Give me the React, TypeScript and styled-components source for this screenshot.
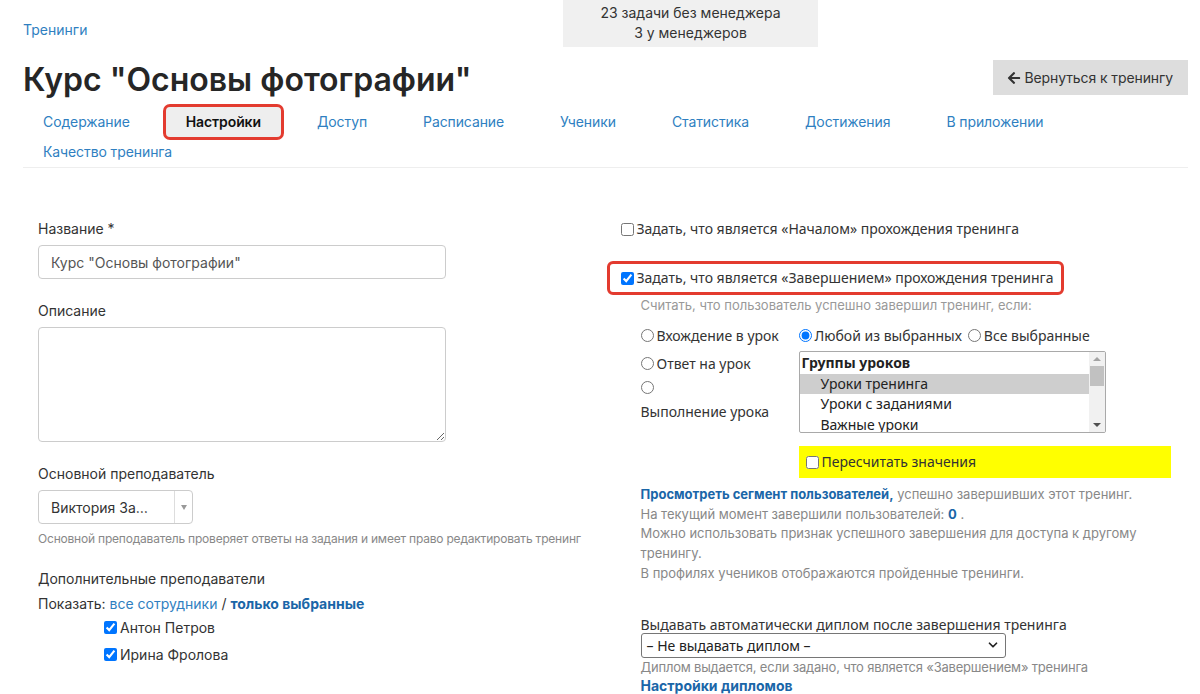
import React from 'react';
import styled, {createGlobalStyle} from 'styled-components';
import {FaArrowLeft} from 'react-icons/fa';
import {ChevronDown} from 'lucide-react';

const GlobalStyle = createGlobalStyle`
body{
  margin: 0;
  background: #fff;
  color: #333;
  font-family: Inter, "Noto Sans", sans-serif;
}
*{box-sizing: border-box;}
`;

const Page = styled.div`
padding: 0 12px 0 23px;
`;
const TopBar = styled.div`
display: grid;
grid-template-columns: 540px 255px;
`;
const Crumb = styled.a`
padding-top: 21px;
font-size: 14px;
line-height: 18px;
color: #2f7fc1;
text-decoration: none;
`;
const Notice = styled.div`
background: #f0f0f0;
text-align: center;
font-size: 14px;
line-height: 20px;
padding: 3px 0 4px;
color: #333;
`;
const TitleRow = styled.div`
display: flex;
justify-content: space-between;
align-items: flex-start;
margin-top: 13px;
`;
const Title = styled.h1`
margin: 0;
font-size: 32px;
font-weight: 600;
line-height: 40px;
color: #262626;
`;
const BackButton = styled.button`
display: flex;
align-items: center;
gap: 3px;
height: 35px;
padding: 0 15px 0 14px;
border: none;
background: #ddd;
color: #333;
font-family: inherit;
font-size: 14px;
letter-spacing: -0.1px;
`;
const Tabs = styled.nav`
display: flex;
flex-wrap: wrap;
column-gap: 16px;
margin-top: 7px;
border-bottom: 1px solid #eee;
`;
const Tab = styled.a<{$active?: boolean}>`
padding: 5px 20px;
font-size: 14px;
line-height: 20px;
letter-spacing: -0.1px;
color: ${p => p.$active ? '#111' : '#2f7fc1'};
font-weight: ${p => p.$active ? 600 : 400};
background: ${p => p.$active ? '#eee' : 'transparent'};
outline: ${p => p.$active ? '3px solid #e33b2f' : 'none'};
border-radius: 4px;
text-decoration: none;
`;
const Form = styled.div`
display: grid;
grid-template-columns: 1fr 1fr;
column-gap: 30px;
padding: 51px 15px 0;
`;
const Column = styled.div`
display: flex;
flex-direction: column;
`;
const Field = styled.div`
margin-bottom: 22px;
`;
const Label = styled.label`
display: block;
font-size: 14px;
line-height: 20px;
color: #333;
margin-bottom: 6px;
`;
const TextInput = styled.input`
width: 408px;
height: 34px;
border: 1px solid #ccc;
border-radius: 4px;
padding: 6px 12px;
font-family: inherit;
font-size: 14px;
color: #555;
`;
const TextArea = styled.textarea`
display: block;
width: 408px;
height: 115px;
border: 1px solid #ccc;
border-radius: 4px;
resize: vertical;
`;
const PickBox = styled.div`
display: flex;
width: 155px;
height: 34px;
border: 1px solid #ccc;
border-radius: 4px;
font-size: 14px;
color: #333;
>.value{
  flex: 1;
  display: flex;
  align-items: center;
  padding-left: 12px;
}
>.caret{
  width: 18px;
  border-left: 1px solid #ddd;
  display: flex;
  align-items: center;
  justify-content: center;
}
>.caret::after{
  content: '';
  border-left: 3px solid transparent;
  border-right: 3px solid transparent;
  border-top: 5px solid #999;
}
`;
const Hint = styled.div<{$size?: number}>`
font-size: ${p => p.$size || 12}px;
line-height: ${p => p.$size ? 18 : 16}px;
letter-spacing: -0.2px;
white-space: nowrap;
color: #888;
`;
const ShowLine = styled.div`
font-size: 14px;
line-height: 20px;
margin-top: 5px;
color: #333;
>a{color: #2f7fc1; text-decoration: none;}
>a.bold{color: #1a66a8; font-weight: 700;}
`;
const TeacherList = styled.div`
padding-left: 66px;
`;
const Check = styled.label<{$font?: string}>`
display: flex;
align-items: center;
font-family: ${p => p.$font || 'inherit'};
font-size: 14px;
line-height: 20px;
color: #333;
>input{margin: 0 3px 0 0; width: 13px; height: 13px;}
`;
const TeacherRow = styled(Check)`
height: 27px;
`;
const Marked = styled.div`
align-self: flex-start;
margin: 22px -10px -7px -14px;
padding: 4px 7px 4px 11px;
border: 3px solid #e33b2f;
border-radius: 6px;
`;
const Note = styled.div`
padding-left: 20px;
margin-top: 9px;
font-size: 13px;
line-height: 16px;
color: #999;
`;
const Condition = styled.div`
display: grid;
grid-template-columns: 158px 372px;
padding-left: 20px;
margin-top: 8px;
`;
const Radio = styled.label`
display: flex;
align-items: center;
height: 28px;
font-family: "Noto Sans", sans-serif;
font-size: 14px;
color: #333;
>input{margin: 0 3px 0 0; width: 13px; height: 13px;}
`;
const RadioStack = styled.label`
display: flex;
flex-direction: column;
align-items: flex-start;
padding-top: 4px;
font-family: "Noto Sans", sans-serif;
font-size: 14px;
line-height: 20px;
color: #333;
>input{margin: 0 0 8px; width: 13px; height: 13px;}
`;
const Modes = styled.div`
display: flex;
gap: 6px;
`;
const ListBox = styled.div`
display: flex;
width: 307px;
height: 82px;
margin-top: 2px;
border: 1px solid #a9a9a9;
border-radius: 2px;
font-family: "Noto Sans", sans-serif;
font-size: 14px;
color: #222;
overflow: hidden;
`;
const Options = styled.div`
flex: 1;
padding-top: 1px;
`;
const Option = styled.div<{$group?: boolean; $selected?: boolean}>`
height: 20.6px;
line-height: 20px;
padding-left: ${p => p.$group ? 2 : 21}px;
font-weight: ${p => p.$group ? 700 : 400};
background: ${p => p.$selected ? '#cecece' : 'transparent'};
white-space: nowrap;
`;
const ScrollBar = styled.div`
width: 16px;
background: #f1f1f1;
display: flex;
flex-direction: column;
align-items: center;
>.up, >.down{
  height: 14px;
  display: flex;
  align-items: center;
}
>.up::after{
  content: '';
  border-left: 4px solid transparent;
  border-right: 4px solid transparent;
  border-bottom: 4px solid #a3a3a3;
}
>.down{margin-top: auto;}
>.down::after{
  content: '';
  border-left: 4px solid transparent;
  border-right: 4px solid transparent;
  border-top: 4px solid #505050;
}
>.thumb{
  width: 14px;
  height: 20px;
  background: #c1c1c1;
}
`;
const Recount = styled.div`
width: 372px;
height: 32px;
margin-top: 13px;
padding-left: 7px;
display: flex;
align-items: center;
background: #ffff00;
`;
const Info = styled.div`
padding-left: 20px;
margin-top: 7px;
max-width: 540px;
font-size: 13px;
line-height: 19.7px;
color: #888;
>p{margin: 0;}
b{color: #1a66a8;}
`;
const Diploma = styled.div`
padding-left: 20px;
margin-top: 32px;
>.caption{
  font-family: "Noto Sans", sans-serif;
  font-size: 14px;
  line-height: 17px;
  color: #333;
}
>.settings{
  display: block;
  font-size: 14px;
  line-height: 19px;
  font-weight: 700;
  color: #1a66a8;
  text-decoration: none;
}
`;
const NativeSelect = styled.div`
display: flex;
align-items: center;
justify-content: space-between;
width: 365px;
height: 25px;
padding: 0 5px 0 5px;
border: 1px solid #767676;
border-radius: 3px;
font-family: "Noto Sans", sans-serif;
font-size: 14px;
color: #222;
`;

const tabs = ['Содержание', 'Настройки', 'Доступ', 'Расписание', 'Ученики', 'Статистика', 'Достижения', 'В приложении', 'Качество тренинга'];

function App() {
    return (
        <Page>
            <GlobalStyle/>
            <TopBar>
                <Crumb href="#">Тренинги</Crumb>
                <Notice>23 задачи без менеджера<br/>3 у менеджеров</Notice>
            </TopBar>
            <TitleRow>
                <Title>Курс "Основы фотографии"</Title>
                <BackButton><FaArrowLeft size={14}/>Вернуться к тренингу</BackButton>
            </TitleRow>
            <Tabs>
                {tabs.map(t => <Tab key={t} href="#" $active={t === 'Настройки'}>{t}</Tab>)}
            </Tabs>
            <Form>
                <Column>
                    <Field>
                        <Label>Название *</Label>
                        <TextInput defaultValue='Курс "Основы фотографии"'/>
                    </Field>
                    <Field>
                        <Label>Описание</Label>
                        <TextArea/>
                    </Field>
                    <Label>Основной преподаватель</Label>
                    <PickBox>
                        <div className="value">Виктория За…</div>
                        <div className="caret"/>
                    </PickBox>
                    <Hint style={{marginTop: 7}}>Основной преподаватель проверяет ответы на задания и имеет право редактировать тренинг</Hint>
                    <Label style={{marginTop: 22, marginBottom: 0}}>Дополнительные преподаватели</Label>
                    <ShowLine>
                        Показать: <a href="#">все сотрудники</a> / <a href="#" className="bold">только выбранные</a>
                    </ShowLine>
                    <TeacherList>
                        <TeacherRow><input type="checkbox" defaultChecked/>Антон Петров</TeacherRow>
                        <TeacherRow><input type="checkbox" defaultChecked/>Ирина Фролова</TeacherRow>
                    </TeacherList>
                </Column>
                <Column>
                    <Check $font='"Noto Sans", sans-serif'>
                        <input type="checkbox"/>Задать, что является «Началом» прохождения тренинга
                    </Check>
                    <Marked>
                        <Check $font='"Noto Sans", sans-serif'>
                            <input type="checkbox" defaultChecked/>Задать, что является «Завершением» прохождения тренинга
                        </Check>
                    </Marked>
                    <Note>Считать, что пользователь успешно завершил тренинг, если:</Note>
                    <Condition>
                        <div>
                            <Radio><input type="radio" name="kind"/>Вхождение в урок</Radio>
                            <Radio><input type="radio" name="kind"/>Ответ на урок</Radio>
                            <RadioStack><input type="radio" name="kind"/>Выполнение урока</RadioStack>
                        </div>
                        <div>
                            <Modes>
                                <Radio><input type="radio" name="mode" defaultChecked/>Любой из выбранных</Radio>
                                <Radio><input type="radio" name="mode"/>Все выбранные</Radio>
                            </Modes>
                            <ListBox>
                                <Options>
                                    <Option $group>Группы уроков</Option>
                                    <Option $selected>Уроки тренинга</Option>
                                    <Option>Уроки с заданиями</Option>
                                    <Option>Важные уроки</Option>
                                </Options>
                                <ScrollBar>
                                    <div className="up"/>
                                    <div className="thumb"/>
                                    <div className="down"/>
                                </ScrollBar>
                            </ListBox>
                            <Recount>
                                <Check $font='"Noto Sans", sans-serif'><input type="checkbox"/>Пересчитать значения</Check>
                            </Recount>
                        </div>
                    </Condition>
                    <Info>
                        <p><b>Просмотреть сегмент пользователей,</b> успешно завершивших этот тренинг.</p>
                        <p>На текущий момент завершили пользователей: <b>0</b> .</p>
                        <p>Можно использовать признак успешного завершения для доступа к другому тренингу.</p>
                        <p>В профилях учеников отображаются пройденные тренинги.</p>
                    </Info>
                    <Diploma>
                        <div className="caption">Выдавать автоматически диплом после завершения тренинга</div>
                        <NativeSelect>
                            <span>– Не выдавать диплом –</span>
                            <ChevronDown size={14} strokeWidth={3} color="#222"/>
                        </NativeSelect>
                        <Hint $size={13}>Диплом выдается, если задано, что является «Завершением» тренинга</Hint>
                        <a className="settings" href="#">Настройки дипломов</a>
                    </Diploma>
                </Column>
            </Form>
        </Page>
    );
}

export default App;
